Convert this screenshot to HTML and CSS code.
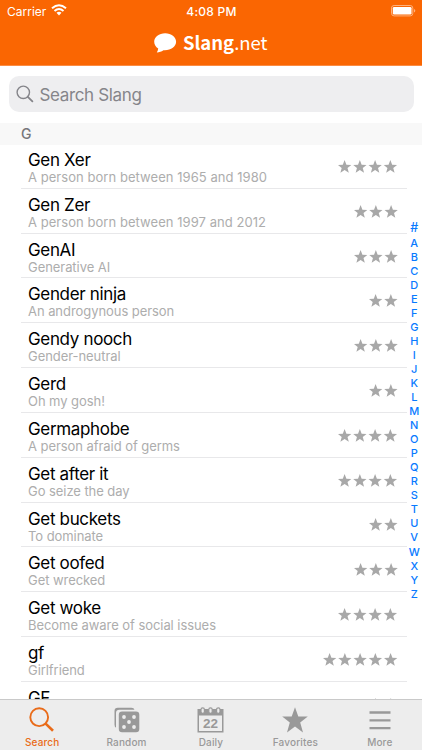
FILE: index.html
```html
<!DOCTYPE html>
<html lang="en">
<head>
<meta charset="utf-8">
<title>Slang.net</title>
<link rel="stylesheet" href="styles.css">
</head>
<body>
<svg class="defs" width="0" height="0">
  <defs>
    <path id="star" d="M6.6 0 8.400 4.700 13.300 4.900 9.500 8 10.800 12.800 6.600 10.100 2.400 12.800 3.700 8 0 4.900 4.800 4.700Z"/>
    <g id="stars">
      <use href="#star"/><use href="#star" x="15.25"/><use href="#star" x="30.5"/><use href="#star" x="45.75"/><use href="#star" x="61"/>
    </g>
  </defs>
</svg>
<div class="app">
  <header class="header">
    <div class="status">
      <div class="carrier"><span>Carrier</span>
        <svg width="16" height="12" viewBox="0 0 16 12" fill="none" stroke="#fff" stroke-width="2"><path d="M1 4.2Q8-1.8 15 4.2M3.5 6.9Q8 3.1 12.5 6.9"/><path d="M5.5 8.8Q8 6.8 10.5 8.8L8 11.5Z" fill="#fff" stroke="none"/></svg>
      </div>
      <div class="time">4:08 PM</div>
      <svg class="battery" width="25" height="12" viewBox="0 0 25 12"><rect x=".5" y=".5" width="21.3" height="10.4" rx="2.6" fill="none" stroke="#ffb17c"/><rect x="1.8" y="1.9" width="18.7" height="7.6" rx="1.3" fill="#fff"/><path d="M23 4v3.6q1.3-.5 1.3-1.8T23 4Z" fill="#ffb17c"/></svg>
    </div>
    <div class="brand">
      <svg width="23" height="21" viewBox="0 0 23 21"><path d="M11.2.2C5 .2.2 4 .2 8.8c0 2.8 1.5 5.2 4 6.8-.1 1.5-.6 2.7-1.4 3.8 2.5-.1 4.8-.9 6.6-2.2 7 .6 12.7-3.2 12.7-8.4C22.100 4 17.300.2 11.200.2Z" fill="#fff"/></svg>
      <span class="wordmark"><b>Slang</b>.net</span>
    </div>
  </header>
  <div class="search">
    <svg width="18" height="18" viewBox="0 0 18 18" fill="none" stroke="#85858a" stroke-width="1.4"><circle cx="7.3" cy="7.3" r="6.2"/><path d="m11.800 11.800 4.600 4.600" stroke-width="1.800" stroke-linecap="round"/></svg>
    <span>Search Slang</span>
  </div>
  <div class="section">G</div>
  <main class="content">
    <ul class="list">
      <li><div><h2>Gen Xer</h2><p class="years">A person born between 1965 and 1980</p></div><svg class="rating r4"><use href="#stars"/></svg></li>
      <li><div><h2>Gen Zer</h2><p class="years">A person born between 1997 and 2012</p></div><svg class="rating r3"><use href="#stars"/></svg></li>
      <li><div><h2>GenAI</h2><p>Generative AI</p></div><svg class="rating r3"><use href="#stars"/></svg></li>
      <li><div><h2>Gender ninja</h2><p>An androgynous person</p></div><svg class="rating r2"><use href="#stars"/></svg></li>
      <li><div><h2>Gendy nooch</h2><p>Gender-neutral</p></div><svg class="rating r3"><use href="#stars"/></svg></li>
      <li><div><h2>Gerd</h2><p>Oh my gosh!</p></div><svg class="rating r2"><use href="#stars"/></svg></li>
      <li><div><h2>Germaphobe</h2><p>A person afraid of germs</p></div><svg class="rating r4"><use href="#stars"/></svg></li>
      <li><div><h2>Get after it</h2><p>Go seize the day</p></div><svg class="rating r4"><use href="#stars"/></svg></li>
      <li><div><h2>Get buckets</h2><p>To dominate</p></div><svg class="rating r2"><use href="#stars"/></svg></li>
      <li><div><h2>Get oofed</h2><p>Get wrecked</p></div><svg class="rating r3"><use href="#stars"/></svg></li>
      <li><div><h2>Get woke</h2><p>Become aware of social issues</p></div><svg class="rating r4"><use href="#stars"/></svg></li>
      <li><div><h2>gf</h2><p>Girlfriend</p></div><svg class="rating r5"><use href="#stars"/></svg></li>
      <li><div><h2>GF</h2></div><svg class="rating r2"><use href="#stars"/></svg></li>
    </ul>
    <nav class="index"><span class="hash">#</span><span>A</span><span>B</span><span>C</span><span>D</span><span>E</span><span>F</span><span>G</span><span>H</span><span>I</span><span>J</span><span>K</span><span>L</span><span>M</span><span>N</span><span>O</span><span>P</span><span>Q</span><span>R</span><span>S</span><span>T</span><span>U</span><span>V</span><span>W</span><span>X</span><span>Y</span><span>Z</span></nav>
  </main>
  <footer class="tabs">
    <div class="tab active">
      <svg width="26" height="26" viewBox="0 0 26 26" fill="none" stroke="currentColor"><circle cx="10.200" cy="10.200" r="8.900" stroke-width="1.900"/><path d="m16.600 16.600 7.400 7.200" stroke-width="2.600"/></svg>
      <span>Search</span>
    </div>
    <div class="tab">
      <svg width="26" height="26" viewBox="0 0 26 26"><path d="M2 20.500Q.5 20 .5 17.500V4Q.5.700 3.800.700H17.500Q20 .700 20.500 2.700H5.500Q2 2.700 2 6Z" fill="currentColor"/><rect x="4.800" y="4.500" width="20.500" height="20.800" rx="3.300" fill="currentColor"/><g fill="#ededed"><circle cx="10" cy="10" r="1.900"/><circle cx="20" cy="10" r="1.900"/><circle cx="15" cy="15" r="1.900"/><circle cx="10" cy="20" r="1.900"/><circle cx="20" cy="20" r="1.900"/></g></svg>
      <span>Random</span>
    </div>
    <div class="tab">
      <svg width="27" height="26" viewBox="0 0 27 26"><path d="M.5 2h26v23.500H.5ZM2 8.500v15.500h23V8.500Z" fill="currentColor" fill-rule="evenodd"/><g fill="#ededed" stroke="currentColor" stroke-width="1.200"><rect x="4" y=".8" width="3.400" height="5.600" rx="1.700"/><rect x="11.800" y=".8" width="3.400" height="5.600" rx="1.700"/><rect x="19.600" y=".8" width="3.400" height="5.600" rx="1.700"/></g><text class="date" x="13.500" y="21.300" text-anchor="middle">22</text></svg>
      <span>Daily</span>
    </div>
    <div class="tab">
      <svg width="26" height="26" viewBox="0 0 26 26"><path d="m13 .2 3.300 9.400h9.500l-7.600 6 2.800 10-8-6-8 6 2.800-10-7.600-6h9.500Z" fill="currentColor"/></svg>
      <span>Favorites</span>
    </div>
    <div class="tab">
      <svg width="22" height="26" viewBox="0 0 22 26"><path d="M.5 5.500h21M.5 13.300h21M.5 21.200h21" stroke="currentColor" stroke-width="2.300"/></svg>
      <span>More</span>
    </div>
  </footer>
</div>
</body>
</html>
```

FILE: styles.css
```css
* { box-sizing: border-box; margin: 0; padding: 0; }
body { font-family: Inter, "Liberation Sans", sans-serif; background: #fff; }
.defs { position: absolute; }
.app { width: 422px; height: 750px; display: flex; flex-direction: column; overflow: hidden; }

.header { flex: none; height: 66px; background: #fa6602; color: #fff; border-bottom: 1px solid #fb8c43; }
.status { display: grid; grid-template-columns: 1fr auto 1fr; align-items: center; height: 22px; padding: 0 6px 0 7px; font-size: 12px; }
.carrier { display: flex; align-items: center; gap: 5px; }
.carrier svg { margin-top: -2px; }
.time { font-weight: 500; letter-spacing: .25px; }
.battery { justify-self: end; margin-top: -1px; }
.brand { display: flex; justify-content: center; align-items: center; height: 41px; gap: 5.500px; }
.brand svg { margin-top: 1px; }
.wordmark { font-family: "Noto Sans CJK JP", sans-serif; font-size: 18.500px; line-height: 28px; margin-top: -1px; }

.search { flex: none; display: flex; align-items: center; gap: 6px; height: 36px; margin: 10px 8.500px 0; padding: 0 8px; border-radius: 10px; background: #eeeef0; color: #85858a; font-size: 17px; letter-spacing: -.35px; }
.search svg { margin-left: -.5px; }
.search span { margin-left: -.5px; margin-top: 1px; }
.section { flex: none; height: 22.500px; margin-top: 10.500px; padding-left: 21px; background: #f8f8f8; color: #77777b; font-size: 14px; font-weight: 500; line-height: 22px; }

.content { flex: 1; min-height: 0; display: flex; overflow: hidden; }
.list { flex: none; width: 386px; margin-left: 20.500px; margin-top: -1px; list-style: none; }
.list li { display: flex; justify-content: space-between; align-items: center; height: 44.820px; padding: 0 9px 0 7.500px; border-bottom: 1px solid #e8e8ea; }
.list li > div { align-self: flex-start; padding-top: 6px; }
h2 { font-size: 17px; font-weight: 400; line-height: 20px; letter-spacing: -.34px; color: #000; }
p { font-size: 13px; line-height: 15px; color: #adadad; letter-spacing: -.06px; }
.years { letter-spacing: .05px; }
.rating { height: 13px; margin-top: 1px; fill: #a8a8a8; overflow: hidden; }
.r2 { width: 28.600px; }
.r3 { width: 43.900px; }
.r4 { width: 59.100px; }
.r5 { width: 74.400px; }
.index { flex: 1; display: flex; flex-direction: column; align-items: center; padding-top: 75px; color: #087aff; font-size: 11px; font-weight: 500; line-height: 14.040px; }
.index .hash { height: 15.500px; font-size: 12.500px; line-height: 16px; }

.tabs { flex: none; display: grid; grid-template-columns: repeat(5, 1fr); height: 51px; border-top: 1px solid #c9c9c9; background: #ededed; color: #999; }
.tab { display: flex; flex-direction: column; align-items: center; padding-top: 7px; font-size: 10px; font-weight: 500; letter-spacing: .15px; }
.tab span { margin-top: 3px; line-height: 13px; }
.active { color: #e96b19; }
.date { font: 700 13.500px "Liberation Sans", sans-serif; fill: currentColor; letter-spacing: 0; }
```
